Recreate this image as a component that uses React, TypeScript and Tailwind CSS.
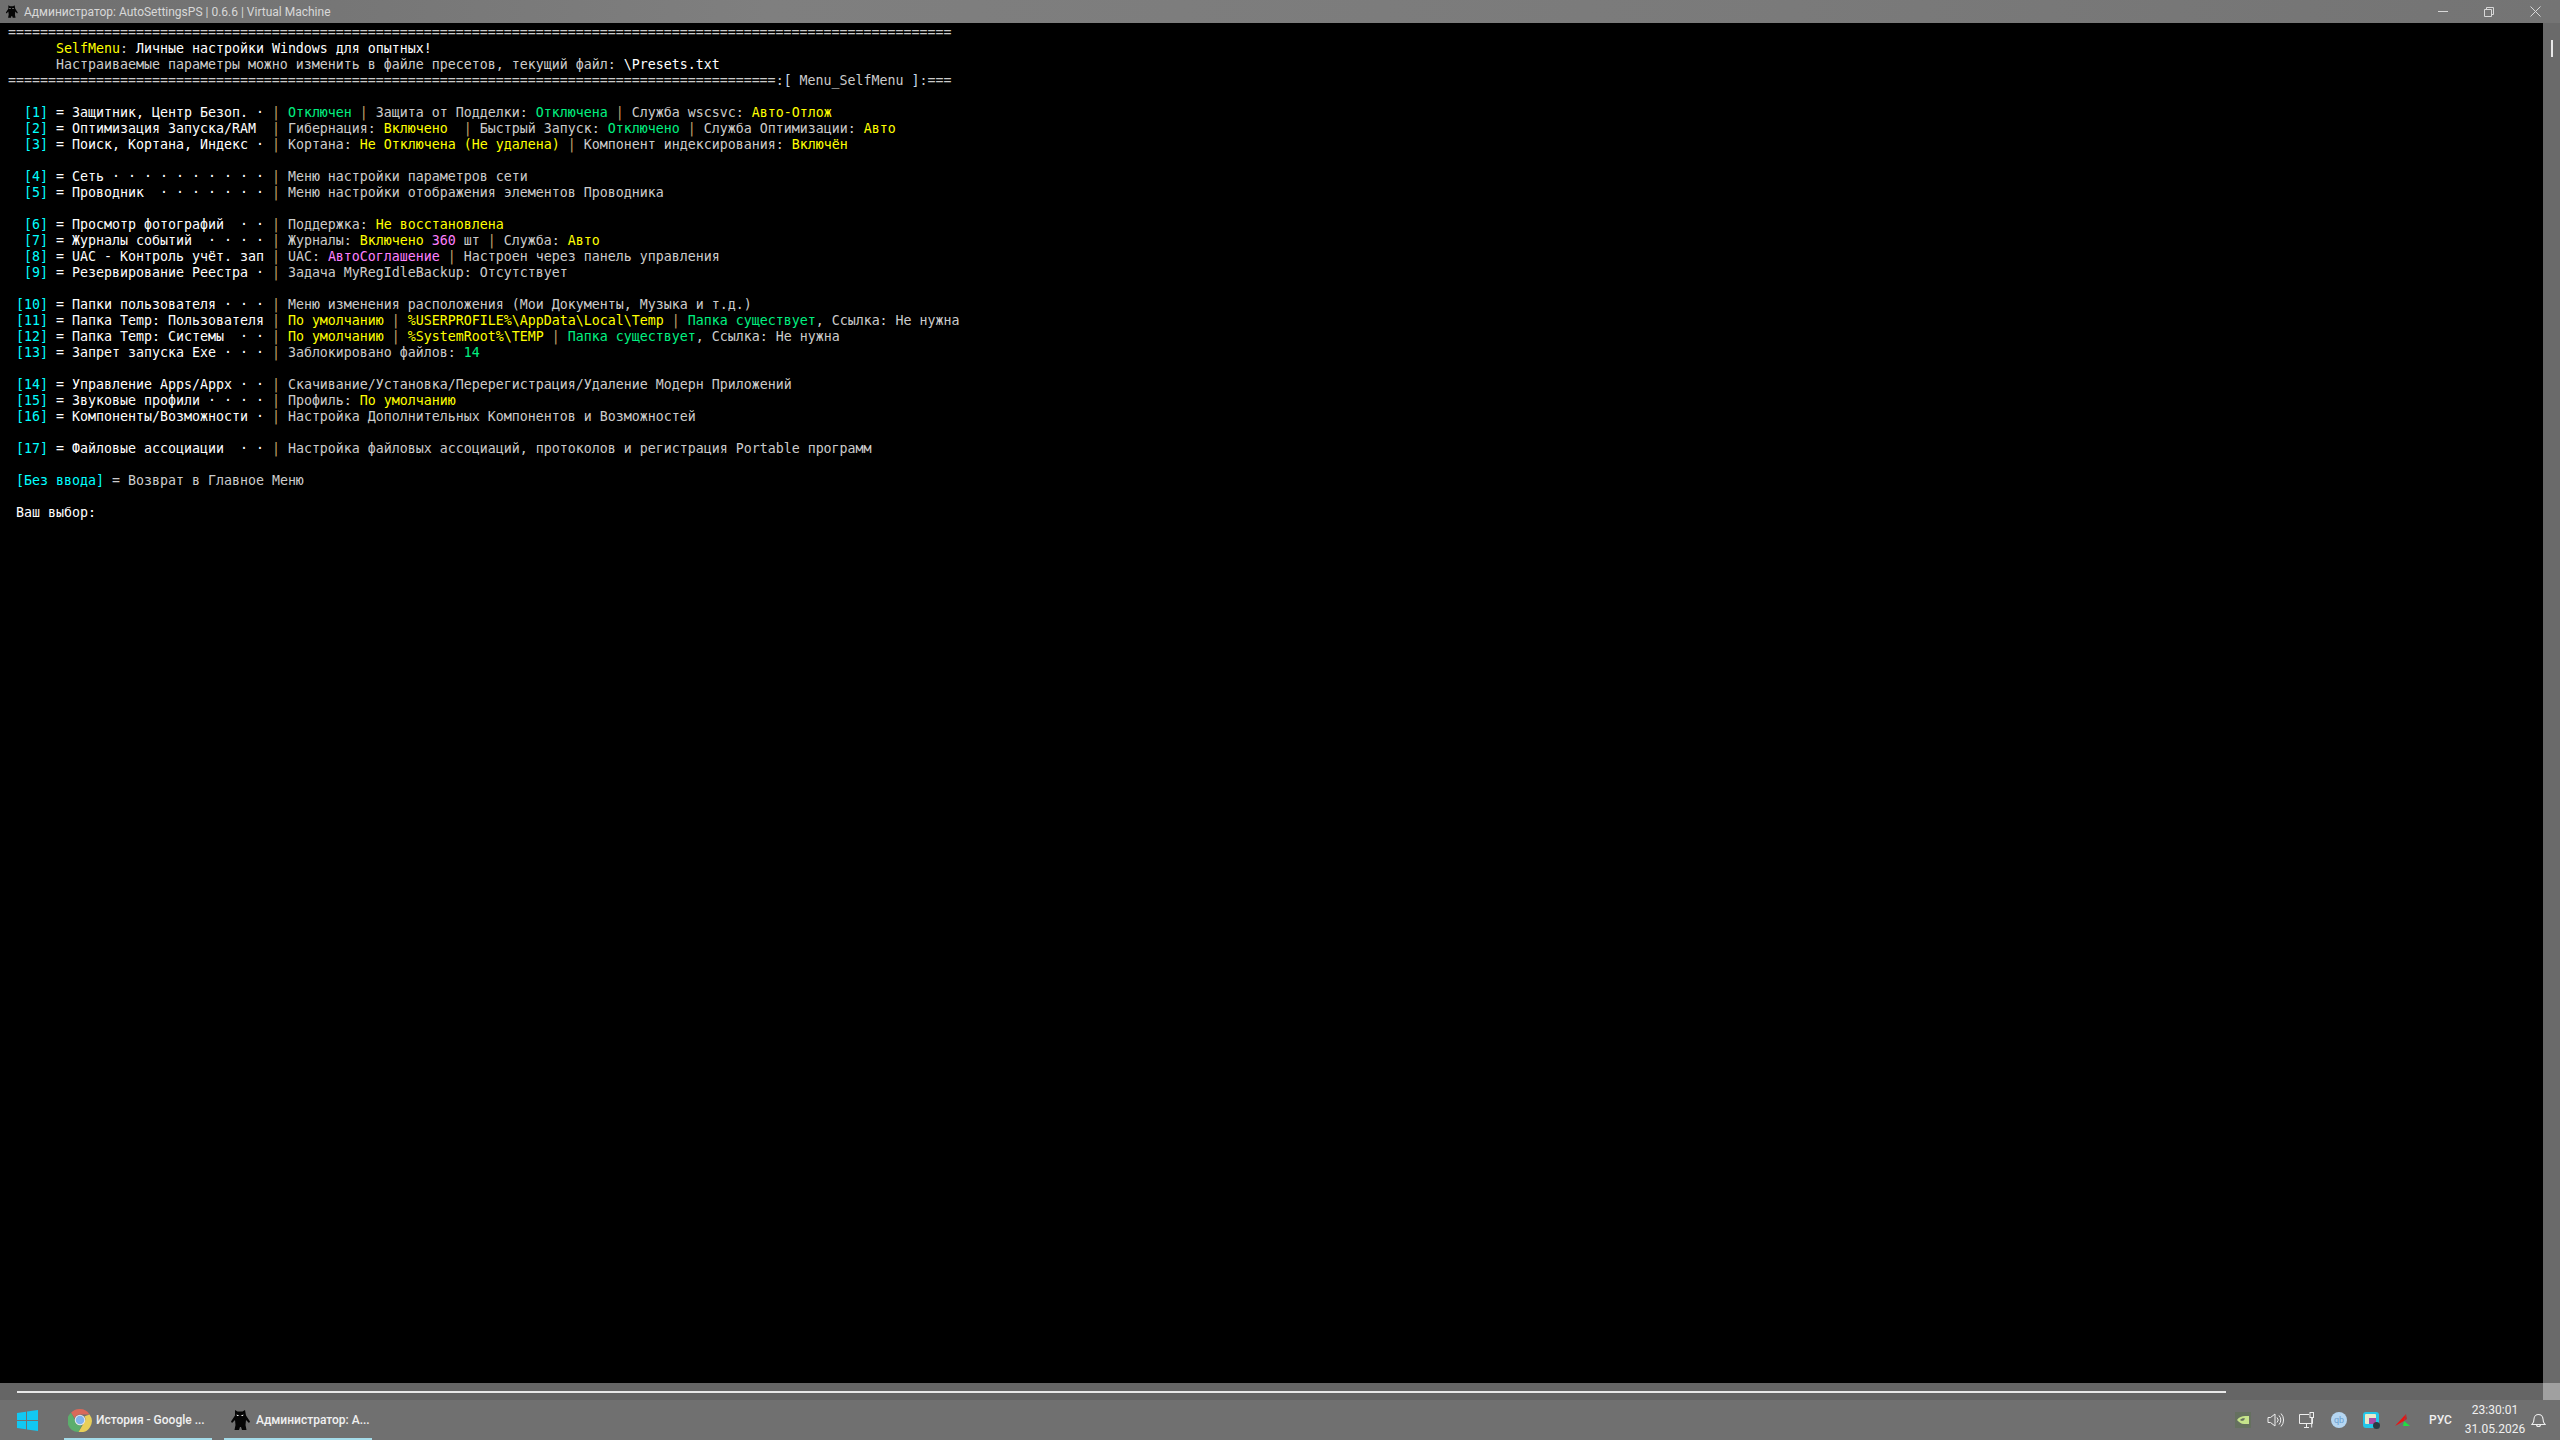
import type { ReactNode } from "react";

const mono = "font-['DejaVu_Sans_Mono','Liberation_Mono',monospace]";
const ui = "font-['Roboto','Noto_Sans',sans-serif]";

function W({ children }: { children: ReactNode }) {
  return <span className="text-[#ffffff]">{children}</span>;
}
function C({ children }: { children: ReactNode }) {
  return <span className="text-[#00ffff]">{children}</span>;
}
function N({ children }: { children: ReactNode }) {
  return <span className="text-[#00f080]">{children}</span>;
}
function Y({ children }: { children: ReactNode }) {
  return <span className="text-[#ffff00]">{children}</span>;
}
function M({ children }: { children: ReactNode }) {
  return <span className="text-[#ff80ff]">{children}</span>;
}
function Bar() {
  return <span className="text-[#c4a46c]"> | </span>;
}

function Line({ children }: { children?: ReactNode }) {
  return <div className="h-[16px] whitespace-pre">{children ?? " "}</div>;
}

function Row({ num, name, children }: { num: string; name: string; children: ReactNode }) {
  return (
    <Line>
      <C>{num.padStart(5, " ")}</C>
      <W> = {name}</W>
      <Bar />
      {children}
    </Line>
  );
}

function CatIcon({ size, eyes }: { size: number; eyes?: boolean }) {
  return (
    <svg width={size} height={size} viewBox="0 0 24 24" className="shrink-0">
      <path
        d="M7 2l2.500 1.500h5L17 2l1 5.500 4 6-1 1.500-3-3-.5 5 1 5h-4.500l-1-3-1 0-1 3H6.500l1-5-.5-5-3 3-1-1.500 4-6z"
        fill="#050505"
      />
      <path d="M8.500 6.500l3 1.200-2.500.3zM15.500 6.500l-3 1.200 2.500.3z" fill={eyes ? "#fff" : "#ddd"} />
    </svg>
  );
}

function ChromeIcon() {
  return (
    <svg width="24" height="24" viewBox="0 0 48 48" className="shrink-0">
      <path d="M24 2a22 22 0 0 1 19.100 11H24a11 11 0 0 0-10.400 7.400L6 9.500A22 22 0 0 1 24 2z" fill="#d9695a" />
      <path d="M6 9.500l9.700 16.800A11 11 0 0 0 27.700 34l-6.500 13.800A22 22 0 0 1 6 9.500z" fill="#5cae6c" />
      <path d="M43.100 13A22 22 0 0 1 21.200 47.800L31.800 29.500A11 11 0 0 0 33 16.500z" fill="#e8cf5a" />
      <circle cx="24" cy="24" r="10.500" fill="#e8e8e8" />
      <circle cx="24" cy="24" r="8.500" fill="#7fb2ee" />
    </svg>
  );
}

function WinLogo() {
  return (
    <svg width="21" height="21" viewBox="0 0 21 21" className="shrink-0">
      <path d="M0 3l9-1.300V10H0zM10 1.500L21 0v10H10zM0 11h9v8.300L0 18zM10 11h11v10l-11-1.500z" fill="#12c8f2" />
    </svg>
  );
}

function TaskButton({ icon, label, width }: { icon: ReactNode; label: string; width: string }) {
  return (
    <div className={`flex h-full ${width} items-center gap-[4px] border-b-2 border-[#a4dcea] pl-[4px] pt-[1px]`}>
      {icon}
      <span className={`${ui} whitespace-pre text-[12px] font-medium text-[#f0f0f0]`}>{label}</span>
    </div>
  );
}

function Tray() {
  return (
    <div className="flex h-full items-center">
      <div className="flex w-[32px] justify-center">
        <div className="flex h-[16px] w-[16px] items-center justify-center bg-[#65705f]">
          <svg width="14" height="10" viewBox="0 0 14 10">
            <path d="M1 5c2-3 5-4 8-4h4v8H8C5 9 3 7 1 5z" fill="#c6e48b" />
            <path d="M4 5c1.500-1.500 3-2 5-1.500C8 6 6 6.500 4 5z" fill="#65705f" />
          </svg>
        </div>
      </div>
      <div className="flex w-[32px] justify-center">
        <svg width="17" height="16" viewBox="0 0 17 16" fill="none" stroke="#eee" strokeWidth="1">
          <path d="M1 5.500h2.500L8 2v12l-4.500-3.500H1z" />
          <path d="M10 5.500a3.500 3.500 0 0 1 0 5M12 3.500a6.500 6.500 0 0 1 0 9M14 1.500a9.500 9.500 0 0 1 0 13" />
        </svg>
      </div>
      <div className="flex w-[32px] justify-center">
        <svg width="16" height="16" viewBox="0 0 16 16" fill="none" stroke="#eee" strokeWidth="1">
          <path d="M10 2.500H.5v9h13V6M5 15.500h5M7.500 11.500v4" />
          <rect x="11" y=".5" width="3.500" height="5" />
          <path d="M12.700 5.500v10" />
        </svg>
      </div>
      <div className="flex w-[32px] justify-center">
        <div className="flex h-[16px] w-[16px] items-center justify-center rounded-full bg-[#b5d6f2]">
          <span className={`${ui} text-[9px] leading-none text-[#6c9fd0]`}>qb</span>
        </div>
      </div>
      <div className="flex w-[32px] justify-center">
        <div className="relative h-[16px] w-[16px] rounded-[3px] bg-[#22c6e8]">
          <div className="absolute left-[2px] top-[2px] h-[10px] w-[11px] rounded-[1px] bg-[#e8eacb]" />
          <div className="absolute left-[6px] top-[6px] h-[6px] w-[7px] bg-[#a84aa8]" />
          <div className="absolute bottom-[-1px] right-[-1px] h-[7px] w-[7px] rounded-full bg-[#2a3a44]" />
        </div>
      </div>
      <div className="flex w-[32px] justify-center">
        <svg width="16" height="14" viewBox="0 0 16 14">
          <path d="M0 13L11 1 9 8z" fill="#f01010" />
          <path d="M9 8l2-7 1 5z" fill="#b03030" />
          <path d="M9 8l6 5H8z" fill="#20e040" />
        </svg>
      </div>
      <span className={`${ui} ml-[10px] w-[32px] text-[12px] font-medium text-[#f0f0f0]`}>РУС</span>
      <div className={`${ui} flex w-[68px] flex-col items-center text-[12px] leading-[19px] text-[#f0f0f0]`}>
        <span>23:30:01</span>
        <span>31.05.2026</span>
      </div>
      <div className="flex w-[31px] justify-start pl-[2px]">
        <svg width="15" height="16" viewBox="0 0 15 16" fill="none" stroke="#eee" strokeWidth="1.100">
          <path d="M1 12.500c1.500-1.500 2-2.500 2-5.500a4.500 4.500 0 0 1 9 0c0 3 .5 4 2 5.500zM5.500 12.500a2 2 0 0 0 4 0" />
        </svg>
      </div>
    </div>
  );
}

export default function App() {
  return (
    <div className="flex h-screen w-full flex-col overflow-hidden bg-black">
      {/* title bar */}
      <div className="flex h-[23px] shrink-0 items-center bg-[linear-gradient(90deg,#6f6f6f_0%,#7f7f7f_30%,#7a7a7a_70%,#747474_100%)]">
        <div className="ml-[4px]">
          <CatIcon size={15} />
        </div>
        <span className={`${ui} ml-[5px] whitespace-pre text-[12px] text-[#d8d8d8]`}>
          Администратор: AutoSettingsPS | 0.6.6 | Virtual Machine
        </span>
        <div className="ml-auto flex h-full items-center pr-[2px]">
          <div className="flex w-[46px] justify-center">
            <div className="h-px w-[10px] bg-[#d8d8d8]" />
          </div>
          <div className="flex w-[46px] justify-center">
            <svg width="10" height="10" viewBox="0 0 10 10" fill="none" stroke="#d8d8d8">
              <path d="M.5 2.500h7v7h-7zM2.500 2.500v-2h7v7h-2" />
            </svg>
          </div>
          <div className="flex w-[46px] justify-center">
            <svg width="11" height="11" viewBox="0 0 11 11" stroke="#d8d8d8">
              <path d="M.5.5l10 10M10.500.5l-10 10" />
            </svg>
          </div>
        </div>
      </div>

      {/* console */}
      <div className="flex min-h-0 flex-1">
        <div className={`${mono} flex-1 overflow-hidden bg-black pl-[8px] pt-[2px] text-[13.29px] leading-[16px] text-[#cccccc]`}>
          <Line>{"=".repeat(118)}</Line>
          <Line>
            {"      "}
            <Y>SelfMenu</Y>: <W>Личные настройки Windows для опытных!</W>
          </Line>
          <Line>
            {"      Настраиваемые параметры можно изменить в файле пресетов, текущий файл: "}
            <W>\Presets.txt</W>
          </Line>
          <Line>
            {"=".repeat(96)}:<span className="text-[#c4d8e8]">[</span> Menu_SelfMenu <span className="text-[#c4d8e8]">]</span>:===
          </Line>
          <Line />
          <Row num="[1]" name="Защитник, Центр Безоп. ·">
            <N>Отключен</N>
            <Bar />
            Защита от Подделки: <N>Отключена</N>
            <Bar />
            Служба wscsvc: <Y>Авто-Отлож</Y>
          </Row>
          <Row num="[2]" name="Оптимизация Запуска/RAM ">
            Гибернация: <Y>Включено</Y> <Bar />
            Быстрый Запуск: <N>Отключено</N>
            <Bar />
            Служба Оптимизации: <Y>Авто</Y>
          </Row>
          <Row num="[3]" name="Поиск, Кортана, Индекс ·">
            Кортана: <Y>Не Отключена (Не удалена)</Y>
            <Bar />
            Компонент индексирования: <Y>Включён</Y>
          </Row>
          <Line />
          <Row num="[4]" name="Сеть · · · · · · · · · ·">
            Меню настройки параметров сети
          </Row>
          <Row num="[5]" name="Проводник  · · · · · · ·">
            Меню настройки отображения элементов Проводника
          </Row>
          <Line />
          <Row num="[6]" name="Просмотр фотографий  · ·">
            Поддержка: <Y>Не восстановлена</Y>
          </Row>
          <Row num="[7]" name="Журналы событий  · · · ·">
            Журналы: <Y>Включено</Y> <M>360</M> шт
            <Bar />
            Служба: <Y>Авто</Y>
          </Row>
          <Row num="[8]" name="UAC - Контроль учёт. зап">
            UAC: <M>АвтоСоглашение</M>
            <Bar />
            Настроен через панель управления
          </Row>
          <Row num="[9]" name="Резервирование Реестра ·">
            Задача MyRegIdleBackup: Отсутствует
          </Row>
          <Line />
          <Row num="[10]" name="Папки пользователя · · ·">
            Меню изменения расположения (Мои Документы, Музыка и т.д.)
          </Row>
          <Row num="[11]" name="Папка Temp: Пользователя">
            <Y>По умолчанию</Y>
            <Bar />
            <Y>%USERPROFILE%\AppData\Local\Temp</Y>
            <Bar />
            <N>Папка существует</N>, Ссылка: Не нужна
          </Row>
          <Row num="[12]" name="Папка Temp: Системы  · ·">
            <Y>По умолчанию</Y>
            <Bar />
            <Y>%SystemRoot%\TEMP</Y>
            <Bar />
            <N>Папка существует</N>, Ссылка: Не нужна
          </Row>
          <Row num="[13]" name="Запрет запуска Exe · · ·">
            Заблокировано файлов: <N>14</N>
          </Row>
          <Line />
          <Row num="[14]" name="Управление Apps/Appx · ·">
            Скачивание/Установка/Перерегистрация/Удаление Модерн Приложений
          </Row>
          <Row num="[15]" name="Звуковые профили · · · ·">
            Профиль: <Y>По умолчанию</Y>
          </Row>
          <Row num="[16]" name="Компоненты/Возможности ·">
            Настройка Дополнительных Компонентов и Возможностей
          </Row>
          <Line />
          <Row num="[17]" name="Файловые ассоциации  · ·">
            Настройка файловых ассоциаций, протоколов и регистрация Portable программ
          </Row>
          <Line />
          <Line>
            {" "}
            <C>[Без ввода]</C> = Возврат в Главное Меню
          </Line>
          <Line />
          <Line>
            {" "}
            <W>Ваш выбор:</W>
          </Line>
        </div>
        {/* vertical scrollbar */}
        <div className="flex w-[17px] shrink-0 justify-center bg-[#6a6a6a] pt-[17px]">
          <div className="h-[17px] w-[2px] bg-[#e8e8e8]" />
        </div>
      </div>

      {/* horizontal scrollbar */}
      <div className="flex h-[17px] shrink-0 bg-[#656565]">
        <div className="flex flex-1 items-center pl-[17px]">
          <div className="h-[2px] w-[2209px] bg-[#e8e8e8]" />
        </div>
        <div className="w-[17px] bg-[#a0a0a0]" />
      </div>

      {/* taskbar */}
      <div className="flex h-[40px] shrink-0 items-center bg-[#707070]">
        <div className="flex w-[64px] pl-[17px]">
          <WinLogo />
        </div>
        <TaskButton icon={<ChromeIcon />} label="История - Google ..." width="w-[148px]" />
        <div className="w-[12px]" />
        <TaskButton icon={<CatIcon size={24} eyes />} label="Администратор: А..." width="w-[148px]" />
        <div className="ml-auto h-full">
          <Tray />
        </div>
      </div>
    </div>
  );
}
